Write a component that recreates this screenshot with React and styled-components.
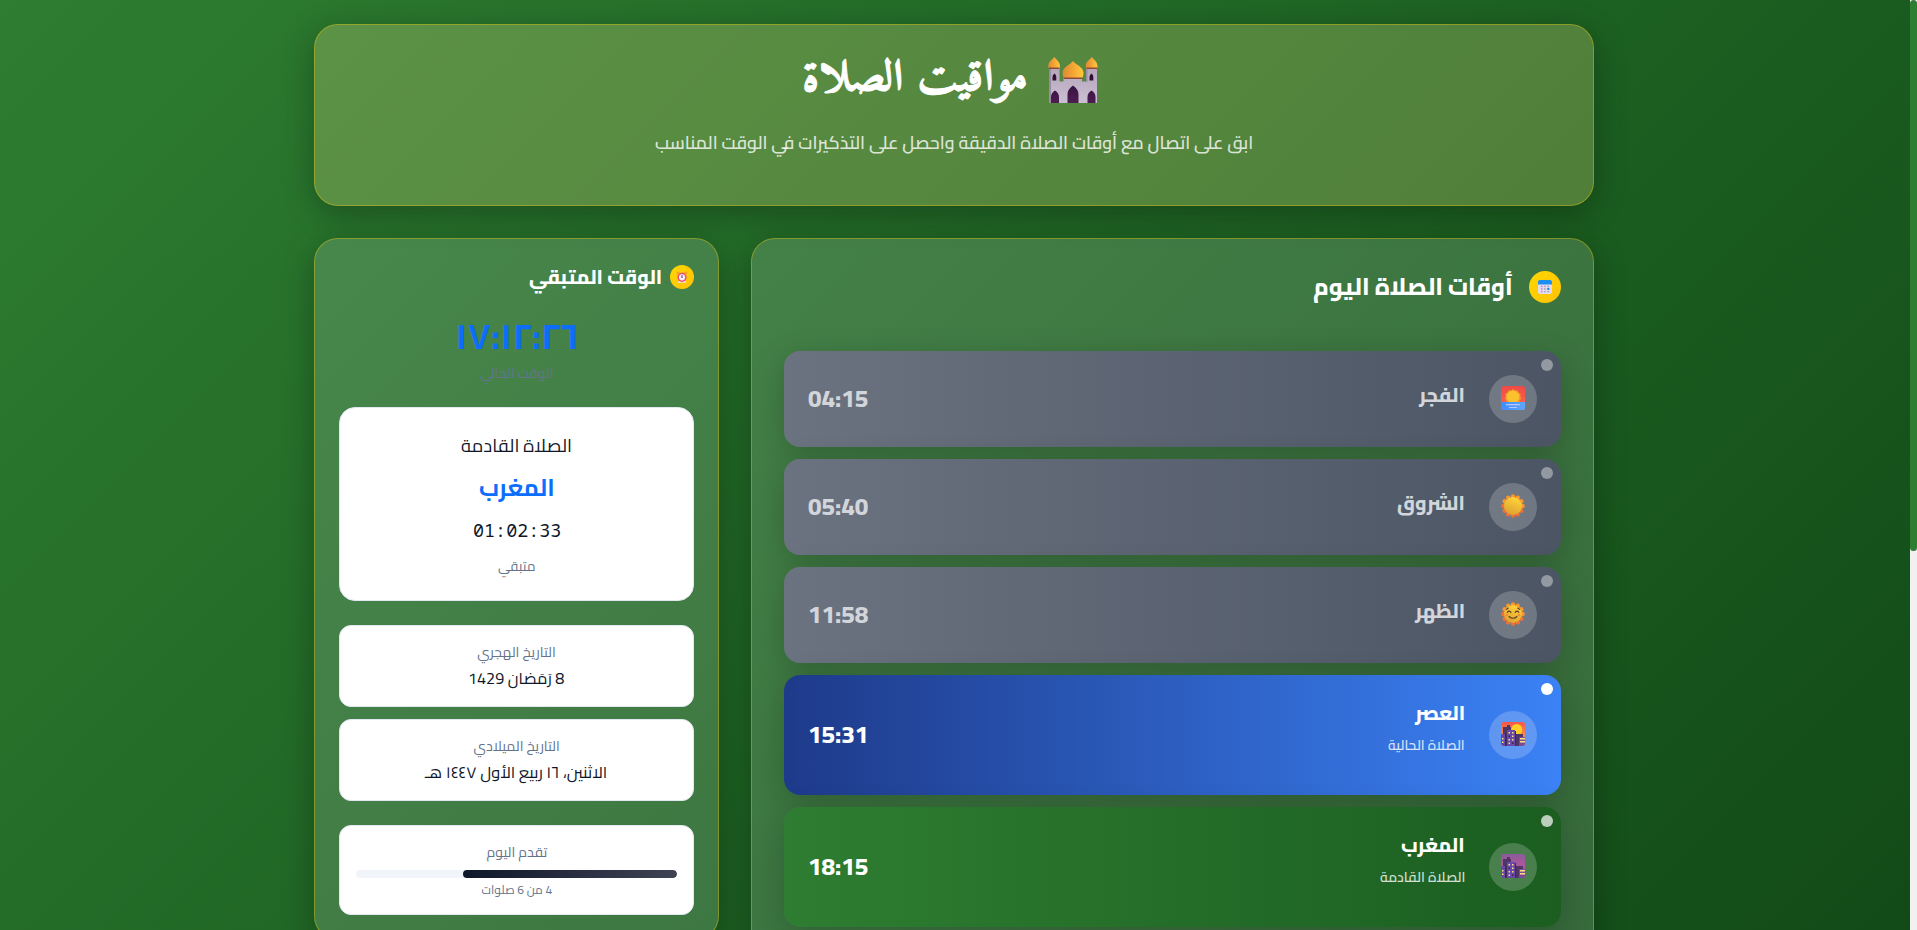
import React, { useLayoutEffect, useRef } from 'react';
import styled, { createGlobalStyle, css } from 'styled-components';

const GlobalStyle = createGlobalStyle`
  *, *::before, *::after { box-sizing: border-box; }
  html, body { margin: 0; height: 930px; overflow: hidden; }
  body { font-family: Cairo, "DejaVu Sans", "Open Sans", sans-serif; color: #fff; }
  svg { display: block; flex: none; }
`;

const Page = styled.div`
  display: grid;
  grid-template-columns: 1fr 7px;
  height: 930px;
  overflow: hidden;
`;

const Main = styled.main`
  direction: rtl;
  height: 930px;
  overflow: hidden;
  padding: 24px 316px 0 314px;
  background: linear-gradient(135deg, #2e7d32 0%, #1b5e20 50%, #0d3f12 100%) 0 0 / 100% 1570px;
`;

const ScrollTrack = styled.div`
  background: #f1f1f1;
`;

const ScrollThumb = styled.div`
  height: 551px;
  border-radius: 4px;
  background: #2e7d32;
`;

const glass = css`
  border: 1px solid rgba(255, 208, 0, 0.34);
  border-radius: 24px;
  box-shadow: 0 8px 32px rgba(0, 0, 0, 0.3);
`;

const Header = styled.header`
  ${glass}
  width: 1280px;
  height: 182px;
  padding-top: 25px;
  background: linear-gradient(rgba(255, 215, 0, 0.1), rgba(255, 215, 0, 0.1)), rgba(255, 255, 255, 0.15);
  display: flex;
  flex-direction: column;
  align-items: center;
`;

const TitleRow = styled.h1`
  margin: 0 8px 0 0;
  height: 60px;
  display: flex;
  align-items: center;
  gap: 20px;
  -webkit-text-stroke: 0.9px #fff;
`;

const Subtitle = styled.p`
  margin: 18px 0 0;
  height: 30px;
`;

const Columns = styled.div`
  display: grid;
  width: 1280px;
  margin-top: 32px;
  grid-template-columns: repeat(3, 1fr);
  gap: 32px;
  align-items: start;
`;

const Panel = styled.section`
  ${glass}
  grid-column: span ${(p) => p.$span};
  padding: ${(p) => p.$pad}px;
  height: ${(p) => p.$height}px;
  background: rgba(255, 255, 255, 0.15);
`;

const PanelHead = styled.div`
  display: flex;
  align-items: center;
  gap: ${(p) => p.$gap}px;
  height: ${(p) => p.$h}px;
`;

const Badge = styled.span`
  display: flex;
  align-items: center;
  justify-content: center;
  width: ${(p) => p.$size}px;
  height: ${(p) => p.$size}px;
  border-radius: 50%;
  background: linear-gradient(135deg, #ffd700, #ffc107);
`;

const PrayerList = styled.div`
  display: flex;
  flex-direction: column;
  gap: 12px;
  margin-top: 48px;
`;

const gradients = {
  past: '#6b7280, #4b5563',
  current: '#1e3a8a, #3b82f6',
  next: '#2e7d32, #1b5e20',
};

const PrayerCard = styled.article`
  position: relative;
  display: flex;
  align-items: center;
  height: ${(p) => (p.$state === 'past' ? 96 : 120)}px;
  padding: 0 24px;
  border-radius: 16px;
  background: linear-gradient(90deg, ${(p) => gradients[p.$state]});
  box-shadow: 0 8px 32px rgba(0, 0, 0, 0.2);
  color: ${(p) => (p.$state === 'past' ? '#d2d5da' : '#fff')};
`;

const StatusDot = styled.span`
  position: absolute;
  top: 8px;
  right: 8px;
  width: 12px;
  height: 12px;
  border-radius: 50%;
  background: ${(p) => ({ past: 'rgba(255,255,255,.4)', current: '#fff', next: 'rgba(255,255,255,.7)' })[p.$state]};
`;

const IconCircle = styled.span`
  display: flex;
  align-items: center;
  justify-content: center;
  width: 48px;
  height: 48px;
  padding-bottom: 2px;
  border-radius: 50%;
  background: rgba(255, 255, 255, 0.2);
`;

const PrayerText = styled.div`
  flex: 1;
  margin-right: 24px;
  display: flex;
  flex-direction: column;
  gap: 4px;
  padding-bottom: ${(p) => (p.$tall ? 12 : 9)}px;
`;

const Clock = styled.div`
  display: flex;
  flex-direction: column;
  align-items: center;
  gap: 5px;
  margin-top: 25px;
`;

const Card = styled.div`
  display: flex;
  flex-direction: column;
  align-items: center;
  height: ${(p) => p.$height}px;
  margin-top: ${(p) => p.$top}px;
  padding: ${(p) => p.$pad}px 16px 0;
  border: 1px solid #e2e8f0;
  border-radius: ${(p) => p.$radius || 12}px;
  background: #fff;
`;

const Bar = styled.div`
  width: 321px;
  height: 8px;
  margin: 7px 0 2px;
  border-radius: 4px;
  overflow: hidden;
  background: #f1f5f9;
`;

const BarFill = styled.div`
  height: 100%;
  border-radius: 4px;
  background: linear-gradient(90deg, #0f172a, #3f4354);
`;

const TextBox = styled.span`
  display: block;
  width: ${(p) => p.$w}px;
  height: ${(p) => p.$h}px;
  line-height: ${(p) => p.$h}px;
  font-size: ${(p) => p.$size}px;
  font-weight: ${(p) => p.$weight || 400};
  font-family: ${(p) => p.$font || 'inherit'};
  color: ${(p) => p.$color || 'inherit'};
  direction: ${(p) => (p.$ltr ? 'ltr' : 'rtl')};
  white-space: nowrap;
`;

const TextInner = styled.span`
  display: inline-block;
  transform-origin: ${(p) => (p.$ltr ? 'left' : 'right')} center;
`;

/* A line of text set to a fixed measure, whatever face is installed. */
function Line({ children, w, h, size, weight, color, font, ltr }) {
  const ref = useRef(null);
  useLayoutEffect(() => {
    const el = ref.current;
    if (el.offsetWidth) el.style.transform = `scaleX(${w / el.offsetWidth})`;
  }, [w, children]);
  return (
    <TextBox $w={w} $h={h} $size={size} $weight={weight} $color={color} $font={font} $ltr={ltr}>
      <TextInner ref={ref} $ltr={ltr}>{children}</TextInner>
    </TextBox>
  );
}

const Mosque = () => (
  <svg width="50" height="46" viewBox="0 0 50 46">
    <defs>
      <linearGradient id="dome" x1="0" x2="1">
        <stop offset="0" stopColor="#dc8a38" />
        <stop offset=".45" stopColor="#f2a233" />
        <stop offset="1" stopColor="#ffc93b" />
      </linearGradient>
      <linearGradient id="wall" x1="0" y1="0" x2="0" y2="1">
        <stop offset="0" stopColor="#b5a5bb" />
        <stop offset="1" stopColor="#cabfd2" />
      </linearGradient>
      <linearGradient id="door" x1="0" y1="0" x2="0" y2="1">
        <stop offset="0" stopColor="#2c0d33" />
        <stop offset="1" stopColor="#4c1d52" />
      </linearGradient>
    </defs>
    <path d="M1.500 11h10v13.500h4V21h18.500v3.500h4V11h11v35H1.500z" fill="url(#wall)" />
    <path d="M1.500 11h1.500v35H1.500zM38 11h1.500v14H38z" fill="#998aa5" />
    <path d="M6.300 0c1 2 5.700 4.500 5.700 9 0 1.500-.5 2.500-1 3H1.200C.5 11 .3 10 .3 8.500.3 4.500 5.300 2 6.300 0z" fill="url(#dome)" />
    <path d="M43.800 0c1 2 5.700 4.500 5.700 9 0 1.500-.5 2.500-1 3h-9.800c-.7-1-.9-2-.9-3.500 0-4 5-6.500 6-8.500z" fill="url(#dome)" />
    <path d="M25 4c1.500 3 10.500 5.500 10.500 12 0 2.500-.8 4.500-1.800 6H16.500c-1.200-1.500-1.900-3.500-1.900-6C14.600 9.500 23.500 7 25 4z" fill="url(#dome)" />
    <path d="M1 10.500h10.500V12H1zM38.500 10.500H49V12H38.500zM15.800 20.500h18.600V22H15.800z" fill="#8f4a35" />
    <path d="M6.500 16.500c1 1 1.800 2 1.800 3.500v3.500H4.500V20c0-1.500 1-2.500 2-3.500zM43.500 16.500c1 1 1.800 2 1.800 3.500v3.500h-3.800V20c0-1.500 1-2.500 2-3.500zM7 33.500c2.500 1.500 4 3.500 4 6.500v6H3v-6c0-3 1.500-5 4-6.500zM43.500 33.500c2.500 1.500 4 3.500 4 6.500v6h-8v-6c0-3 1.500-5 4-6.500zM25 28.500c3.500 2.500 5.500 5 5.500 9V46H19.500v-8.500c0-4 2-6.500 5.500-9z" fill="url(#door)" />
  </svg>
);

const Calendar = () => (
  <svg width="14" height="14" viewBox="0 0 14 14">
    <rect x="0" y="1" width="14" height="13" rx="2" fill="#e3daf0" />
    <path d="M0 4.500V2a2 2 0 0 1 2-2h10a2 2 0 0 1 2 2v2.500z" fill="#1c8ff2" />
    <path d="M3 5.700h1.500v1.300H3zM6.200 5.700h1.500v1.300H6.200zM9.500 5.700H11v1.300H9.500zM3 8.300h1.500v1.400H3zM6.200 8.300h1.500v1.400H6.200zM3 11h1.500v1.300H3zM6.200 11h1.500v1.300H6.200zM9.500 11H11v1.300H9.500z" fill="#a596b8" />
    <circle cx="10.300" cy="8.900" r="1.200" fill="#1c8ff2" />
  </svg>
);

const Alarm = () => (
  <svg width="12" height="12" viewBox="0 0 12 12">
    <path d="M.5 3.500C.3 1.500 1.500.5 3.300.8L4 2zM11.500 3.500c.2-2-1-3-2.800-2.700L8 2z" fill="#f79a2c" />
    <path d="M1.500 11.700l1-1.700h7l1 1.700z" fill="#f1e0d8" />
    <circle cx="6" cy="6.300" r="4.600" fill="#ee4b76" />
    <circle cx="6" cy="6.300" r="3.100" fill="#f7eef8" />
    <path d="M6 4.300v2.700" stroke="#43304f" strokeWidth="1" />
  </svg>
);

const Sunrise = () => (
  <svg width="24" height="24" viewBox="0 0 24 24">
    <defs>
      <linearGradient id="dawn" x1="0" y1="0" x2="0" y2="1">
        <stop offset="0" stopColor="#ee4a45" />
        <stop offset="1" stopColor="#ff6a50" />
      </linearGradient>
      <linearGradient id="sea" x1="0" x2="1">
        <stop offset="0" stopColor="#3f8cff" />
        <stop offset="1" stopColor="#60a6fb" />
      </linearGradient>
    </defs>
    <rect width="24" height="24" rx="2.500" fill="url(#dawn)" />
    <path d="M12 3l2 1.500 2.500-.2 1 2.300 2.200 1.300-.4 2.500.9 2.300-1.700 1.800.2 2H5.300l.2-2-1.700-1.800.9-2.300-.4-2.500 2.200-1.300 1-2.300 2.500.2z" fill="#f39a28" />
    <circle cx="12" cy="11" r="6.300" fill="#fbc22f" />
    <path d="M0 16h24v5.500a2.500 2.500 0 0 1-2.500 2.500h-19A2.500 2.500 0 0 1 0 21.500z" fill="url(#sea)" />
    <path d="M5.500 18.700h13M8.500 21.500h7" stroke="#b9c8fb" strokeWidth="1.200" strokeLinecap="round" />
  </svg>
);

const Sun = ({ face }) => (
  <svg width="24" height="24" viewBox="0 0 24 24">
    <defs>
      <linearGradient id="sun" x1=".7" y1="0" x2=".3" y2="1">
        <stop offset="0" stopColor="#ffd43a" />
        <stop offset="1" stopColor="#dda12f" />
      </linearGradient>
    </defs>
    {Array.from({ length: 12 }, (_, i) => (
      <circle
        key={i}
        cx={12 + 9.6 * Math.cos((i * Math.PI) / 6)}
        cy={12 + 9.6 * Math.sin((i * Math.PI) / 6)}
        r="2.200"
        fill={i > 0 && i < 7 ? '#ee7238' : '#f9962c'}
      />
    ))}
    <circle cx="12" cy="12" r="9" fill="url(#sun)" />
    {face && (
      <g fill="none" stroke="#5c3b30" strokeWidth="1.100" strokeLinecap="round">
        <path d="M6.300 10.300q1.700-2.300 3.700 0M14.200 10.300q1.700-2.300 3.700 0M5.300 7.500l2-1.500M18.700 7.500l-2-1.500" />
        <path d="M8 14.500q4 3.500 8 0" />
        <path d="M5.500 13h1M17.500 13h1" stroke="#f58a3a" strokeWidth="2" />
      </g>
    )}
  </svg>
);

const City = ({ dusk }) => {
  const id = dusk ? 'dusk' : 'sunset';
  return (
    <svg width="24" height="24" viewBox="0 0 24 24">
      <defs>
        <linearGradient id={id} x1="0" y1="0" x2="0" y2="1">
          <stop offset="0" stopColor={dusk ? '#8a5c9c' : '#f4584a'} />
          <stop offset=".6" stopColor={dusk ? '#b7559a' : '#ff8b4a'} />
        </linearGradient>
        <clipPath id={`${id}-clip`}>
          <rect width="24" height="24" rx="2.500" />
        </clipPath>
      </defs>
      <g clipPath={`url(#${id}-clip)`}>
        <rect width="24" height="24" fill={`url(#${id})`} />
        {!dusk && <circle cx="15.800" cy="7.500" r="5.500" fill="#ffcf27" />}
        <path d="M2 5h4V3h3v2h1v19H2zM14 12h8v12h-8z" fill="#4f3566" />
        <path d="M0 12h4v12H0zM6 8h8v16H6z" fill="#6a4aa8" />
        <path d="M4 12h1.500v12H4zM14 9h1v15h-1z" fill="#3d2857" />
        <path d="M18 15h6v9h-6z" fill="#7b4b98" />
        <path d="M19 16h5v1.500h-5zM19 19h5v1.500h-5zM1 16h1.500v1.500H1zM1 19.500h1.500V21H1zM7.500 10H9v1.500H7.500zM11 10h1.500v1.500H11zM11 13.500h1.500V15H11zM7.500 17H9v1.500H7.500zM11 17h1.500v1.500H11zM7.500 20.500H9V22H7.500z" fill="#ffe37a" />
        <path d="M7.500 13.500H9V15H7.500zM11 20.500h1.500V22H11z" fill="#37234c" />
      </g>
    </svg>
  );
};

const prayers = [
  { name: 'الفجر', w: 46, time: '04:15', state: 'past', icon: <Sunrise /> },
  { name: 'الشروق', w: 68, time: '05:40', state: 'past', icon: <Sun /> },
  { name: 'الظهر', w: 50, time: '11:58', state: 'past', icon: <Sun face /> },
  { name: 'العصر', w: 50, time: '15:31', state: 'current', icon: <City />, note: 'الصلاة الحالية', noteW: 77 },
  { name: 'المغرب', w: 64, time: '18:15', state: 'next', icon: <City dusk />, note: 'الصلاة القادمة', noteW: 85 },
];

const INK = '#0f172a';
const MUTED = '#64748b';
const BLUE = '#0d6efd';
const NASKH = 'Amiri, "Times New Roman", "Noto Naskh Arabic", "DejaVu Sans", serif';
const MONO = 'Consolas, "Noto Sans Mono", "DejaVu Sans Mono", monospace';

export default function App() {
  return (
    <Page>
      <GlobalStyle />
      <Main>
        <Header>
          <TitleRow>
            <Mosque />
            <Line w={226} h={60} size={44} weight={700} font={NASKH}>مواقيت الصلاة</Line>
          </TitleRow>
          <Subtitle>
            <Line w={598} h={30} size={18} weight={600} color="rgba(255,255,255,.8)">
              ابق على اتصال مع أوقات الصلاة الدقيقة واحصل على التذكيرات في الوقت المناسب
            </Line>
          </Subtitle>
        </Header>
        <Columns>
          <Panel $span={2} $pad={32} $height={860}>
            <PanelHead $gap={16} $h={32}>
              <Badge $size={32}><Calendar /></Badge>
              <Line w={200} h={32} size={24} weight={800}>أوقات الصلاة اليوم</Line>
            </PanelHead>
            <PrayerList>
              {prayers.map((p) => (
                <PrayerCard key={p.name} $state={p.state}>
                  <IconCircle>{p.icon}</IconCircle>
                  <PrayerText $tall={!!p.note}>
                    <Line w={p.w} h={28} size={20} weight={800}>{p.name}</Line>
                    {p.note && <Line w={p.noteW} h={28} size={14} weight={600} color="rgba(255,255,255,.8)">{p.note}</Line>}
                  </PrayerText>
                  <Line w={60} h={32} size={24} weight={800} ltr>{p.time}</Line>
                  <StatusDot $state={p.state} />
                </PrayerCard>
              ))}
            </PrayerList>
          </Panel>
          <Panel $span={1} $pad={24} $height={702}>
            <PanelHead $gap={8} $h={28}>
              <Badge $size={24}><Alarm /></Badge>
              <Line w={133} h={28} size={20} weight={800}>الوقت المتبقي</Line>
            </PanelHead>
            <Clock>
              <Line w={124} h={40} size={36} weight={700} color={BLUE}>١٧:١٢:٢٦</Line>
              <Line w={73} h={24} size={14} color={MUTED}>الوقت الحالي</Line>
            </Clock>
            <Card $height={194} $top={22} $pad={24} $radius={16}>
              <Line w={111} h={28} size={18} color={INK}>الصلاة القادمة</Line>
              <Line w={76} h={56} size={24} weight={700} color={BLUE}>المغرب</Line>
              <Line w={88} h={28} size={18} color={INK} font={MONO} ltr>01:02:33</Line>
              <Line w={38} h={44} size={14} color={MUTED}>متبقي</Line>
            </Card>
            <Card $height={82} $top={24} $pad={15}>
              <Line w={78} h={22} size={14} color={MUTED}>التاريخ الهجري</Line>
              <Line w={96} h={30} size={16} color={INK}>8 رَمَضان 1429</Line>
            </Card>
            <Card $height={82} $top={12} $pad={15}>
              <Line w={86} h={22} size={14} color={MUTED}>التاريخ الميلادي</Line>
              <Line w={182} h={30} size={16} color={INK}>الاثنين، ١٦ ربيع الأول ١٤٤٧ هـ</Line>
            </Card>
            <Card $height={90} $top={24} $pad={15}>
              <Line w={61} h={22} size={14} color={MUTED}>تقدم اليوم</Line>
              <Bar><BarFill style={{ width: `${(4 / 6) * 100}%` }} /></Bar>
              <Line w={71} h={20} size={12} color={MUTED}>4 من 6 صلوات</Line>
            </Card>
          </Panel>
        </Columns>
      </Main>
      <ScrollTrack><ScrollThumb /></ScrollTrack>
    </Page>
  );
}
